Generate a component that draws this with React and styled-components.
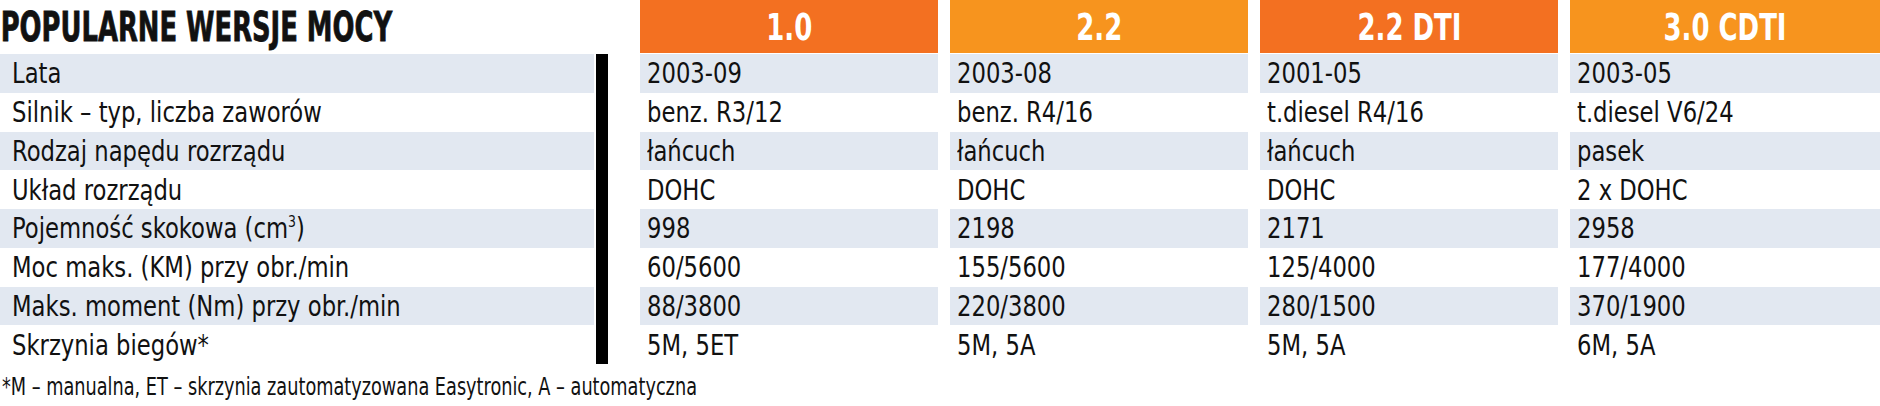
import styled, { createGlobalStyle } from "styled-components";

const GlobalStyle = createGlobalStyle`
    html, body {
        margin: 0;
        padding: 0;
        background: #ffffff;
    }
    body {
        font-family: "Liberation Sans Narrow", "DejaVu Sans Condensed", "Liberation Sans", sans-serif;
        color: #111111;
    }
`;

const Page = styled.div`
    width: 1880px;
    height: 406px;
    overflow: hidden;
`;

const Table = styled.div`
    display: grid;
    grid-template-columns: 594px 46px repeat(4, 1fr);
    grid-template-rows: 54px repeat(8, 38.75px);
`;

const Title = styled.div`
    grid-column: 1 / 3;
    grid-row: 1;
    align-self: center;
    padding-left: 1px;
    font-size: 41px;
    font-weight: 700;
    -webkit-text-stroke: 0.8px #111;
    line-height: 1;
    white-space: nowrap;
    transform: scaleX(0.7);
    transform-origin: left center;
    color: #111;
`;

const Head = styled.div`
    grid-row: 1;
    grid-column: ${(p) => p.$col};
    display: flex;
    align-items: center;
    justify-content: center;
    margin-right: ${(p) => (p.$last ? "0" : "12px")};
    margin-bottom: 1px;
    background: ${(p) => (p.$light ? "#f7941e" : "#f37021")};
    color: #ffffff;
    font-size: 38px;
    font-weight: 700;
    line-height: 1;
`;

const Narrow = styled.span`
    display: inline-block;
    white-space: nowrap;
    transform: scaleX(${(p) => p.$scale || 0.87});
    transform-origin: ${(p) => (p.$center ? "center" : "left")} center;
`;

const Label = styled.div`
    grid-column: 1;
    grid-row: ${(p) => p.$row};
    display: flex;
    align-items: center;
    padding-left: 12px;
    font-size: 29px;
    background: ${(p) => (p.$band ? "#e2e8f1" : "transparent")};
`;

const Sup = styled.sup`
    font-size: 0.55em;
    line-height: 0;
    vertical-align: 0.7em;
`;

const Bar = styled.div`
    grid-column: 2;
    grid-row: 2 / 10;
    width: 12px;
    margin-left: 2px;
    background: #000;
`;

const Cell = styled.div`
    grid-column: ${(p) => p.$col};
    grid-row: ${(p) => p.$row};
    display: flex;
    align-items: center;
    padding-left: 7px;
    margin-right: ${(p) => (p.$last ? "0" : "12px")};
    font-size: 29px;
    background: ${(p) => (p.$band ? "#e2e8f1" : "transparent")};
`;

const Footnote = styled.div`
    padding-left: 2px;
    margin-top: 9px;
    font-size: 24px;
`;

const heads = [
    { name: "1.0", light: false },
    { name: "2.2", light: true },
    { name: "2.2 DTI", light: false },
    { name: "3.0 CDTI", light: true },
];

const rows = [
    { label: "Lata", values: ["2003-09", "2003-08", "2001-05", "2003-05"] },
    { label: "Silnik – typ, liczba zaworów", values: ["benz. R3/12", "benz. R4/16", "t.diesel R4/16", "t.diesel V6/24"] },
    { label: "Rodzaj napędu rozrządu", values: ["łańcuch", "łańcuch", "łańcuch", "pasek"] },
    { label: "Układ rozrządu", values: ["DOHC", "DOHC", "DOHC", "2 x DOHC"] },
    { label: <>Pojemność skokowa (cm<Sup>3</Sup>)</>, values: ["998", "2198", "2171", "2958"] },
    { label: "Moc maks. (KM) przy obr./min", values: ["60/5600", "155/5600", "125/4000", "177/4000"] },
    { label: "Maks. moment (Nm) przy obr./min", values: ["88/3800", "220/3800", "280/1500", "370/1900"] },
    { label: "Skrzynia biegów*", values: ["5M, 5ET", "5M, 5A", "5M, 5A", "6M, 5A"] },
];

function App() {
    return (
        <Page>
            <GlobalStyle />
            <Table>
                <Title>POPULARNE WERSJE MOCY</Title>
                {heads.map((h, i) => (
                    <Head key={h.name} $col={i + 3} $light={h.light} $last={i === 3}>
                        <Narrow $center $scale={0.76}>{h.name}</Narrow>
                    </Head>
                ))}
                <Bar />
                {rows.map((r, ri) => [
                    <Label key={"l" + ri} $row={ri + 2} $band={ri % 2 === 0}>
                        <Narrow>{r.label}</Narrow>
                    </Label>,
                    ...r.values.map((v, ci) => (
                        <Cell key={ri + "-" + ci} $row={ri + 2} $col={ci + 3} $band={ri % 2 === 0} $last={ci === 3}>
                            <Narrow>{v}</Narrow>
                        </Cell>
                    )),
                ])}
            </Table>
            <Footnote>
                <Narrow $scale={0.82}>*M – manualna, ET – skrzynia zautomatyzowana Easytronic, A – automatyczna</Narrow>
            </Footnote>
        </Page>
    );
}

export default App;
